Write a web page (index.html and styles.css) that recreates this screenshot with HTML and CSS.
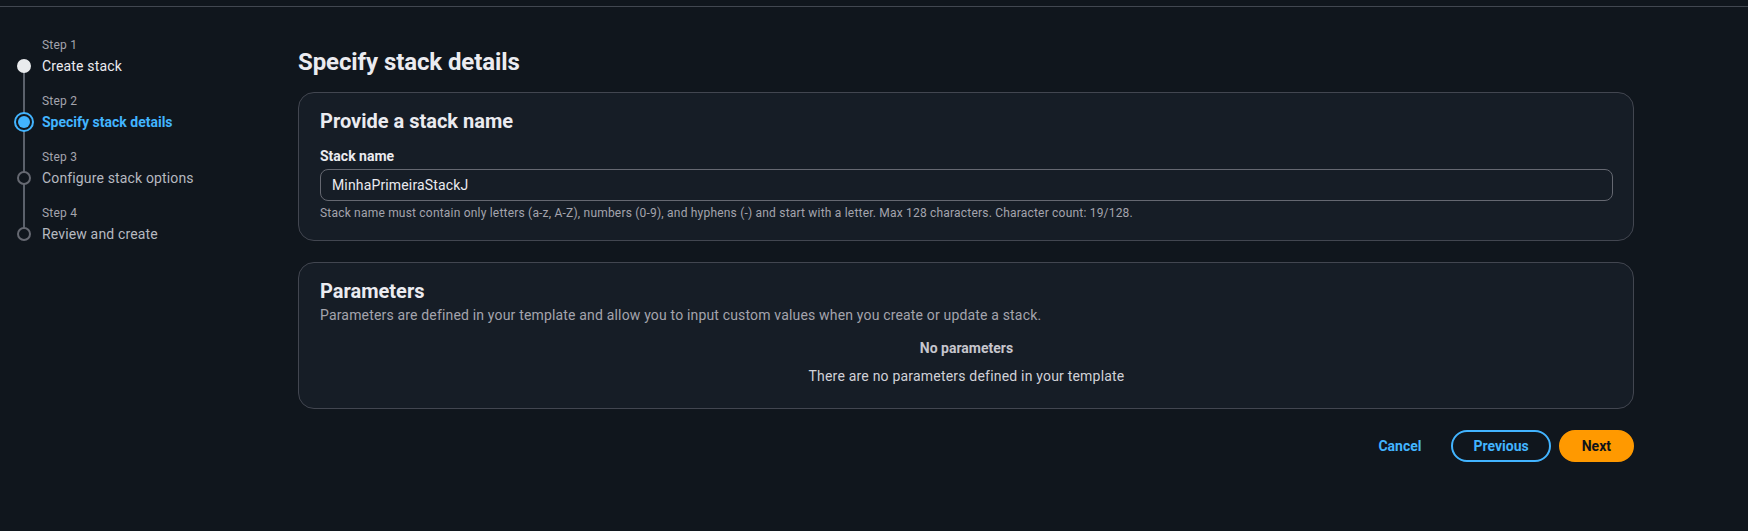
FILE: index.html
```html
<!DOCTYPE html>
<html lang="en">
<head>
<meta charset="utf-8">
<title>Specify stack details</title>
<link rel="stylesheet" href="styles.css">
</head>
<body>
<div class="topbar"></div>
<div class="layout">
  <nav class="steps">
    <ol class="step-list">
      <li class="step done">
        <span class="step-label">Step 1</span>
        <span class="marker"></span>
        <span class="step-title">Create stack</span>
      </li>
      <li class="step active">
        <span class="step-label">Step 2</span>
        <span class="marker"><span class="marker-dot"></span></span>
        <span class="step-title">Specify stack details</span>
      </li>
      <li class="step">
        <span class="step-label">Step 3</span>
        <span class="marker"></span>
        <span class="step-title">Configure stack options</span>
      </li>
      <li class="step">
        <span class="step-label">Step 4</span>
        <span class="marker"></span>
        <span class="step-title">Review and create</span>
      </li>
    </ol>
  </nav>
  <main class="content">
    <h1 class="page-title">Specify stack details</h1>

    <section class="card">
      <h2 class="card-title">Provide a stack name</h2>
      <label class="field-label" for="stackname">Stack name</label>
      <input class="text-input" id="stackname" type="text" value="MinhaPrimeiraStackJ">
      <p class="field-hint">Stack name must contain only letters (a-z, A-Z), numbers (0-9), and hyphens (-) and start with a letter. Max 128 characters. Character count: 19/128.</p>
    </section>

    <section class="card card-params">
      <h2 class="card-title">Parameters</h2>
      <p class="card-desc">Parameters are defined in your template and allow you to input custom values when you create or update a stack.</p>
      <div class="empty">
        <div class="empty-title">No parameters</div>
        <div class="empty-text">There are no parameters defined in your template</div>
      </div>
    </section>

    <div class="actions">
      <button class="btn btn-link" type="button">Cancel</button>
      <button class="btn btn-normal" type="button">Previous</button>
      <button class="btn btn-primary" type="button">Next</button>
    </div>
  </main>
</div>
</body>
</html>
```
FILE: styles.css
```css
* { box-sizing: border-box; }

html, body {
  margin: 0;
  padding: 0;
}

body {
  background: #10161d;
  color: #c6c6cd;
  font-family: Roboto, "Noto Sans", "Liberation Sans", sans-serif;
  font-size: 14px;
  line-height: 20px;
  letter-spacing: 0.15px;
  height: 531px;
  overflow: hidden;
}

.topbar {
  height: 7px;
  border-bottom: 1px solid #414750;
}

.layout {
  display: grid;
  grid-template-columns: 298px 1336px;
}

/* ---------- steps navigation ---------- */
.steps {
  padding: 30px 0 0 10px;
}

.step-list {
  list-style: none;
  margin: 0;
  padding: 0;
}

.step {
  position: relative;
  display: grid;
  grid-template-columns: 28px auto;
  grid-template-rows: 16px 20px;
  column-gap: 4px;
  row-gap: 3px;
  margin-bottom: 17px;
}

.step:not(:last-child)::after {
  content: "";
  position: absolute;
  left: 13px;
  top: 29px;
  width: 2px;
  height: 56px;
  background: #5b616b;
  z-index: 0;
}

.step-label {
  grid-column: 2;
  grid-row: 1;
  font-size: 12px;
  line-height: 16px;
  color: #a4a4ad;
  letter-spacing: 0.2px;
}

.marker {
  grid-column: 1;
  grid-row: 2;
  justify-self: center;
  align-self: center;
  position: relative;
  z-index: 1;
  width: 14px;
  height: 14px;
  border-radius: 50%;
  border: 2px solid #656871;
  background: #10161d;
  display: flex;
  align-items: center;
  justify-content: center;
}

.step.done .marker {
  background: #e9ebed;
  border-color: #e9ebed;
}

.step.active .marker {
  width: 20px;
  height: 20px;
  border-color: #42b4ff;
}

.marker-dot {
  width: 12px;
  height: 12px;
  border-radius: 50%;
  background: #42b4ff;
}

.step-title {
  grid-column: 2;
  grid-row: 2;
  font-size: 14px;
  line-height: 20px;
  color: #b6b9c0;
  white-space: nowrap;
}

.step.done .step-title { color: #ebebf0; }
.step.active .step-title { color: #42b4ff; font-weight: 700; letter-spacing: 0; }

/* ---------- main content ---------- */
.content {
  padding-top: 40px;
}

.page-title {
  margin: 0 0 15px;
  font-size: 24px;
  line-height: 30px;
  font-weight: 700;
  letter-spacing: -0.1px;
  color: #ebebf0;
}

.card {
  background: #161d26;
  border: 1px solid #424650;
  border-radius: 16px;
  padding: 16px 20px 19px 21px;
  display: flex;
  flex-direction: column;
}

.card-params {
  margin-top: 21px;
  padding-bottom: 22px;
}

.card-title {
  margin: 0;
  font-size: 20px;
  line-height: 24px;
  font-weight: 700;
  letter-spacing: 0;
  color: #ebebf0;
}

.field-label {
  margin-top: 13px;
  font-size: 14px;
  line-height: 20px;
  font-weight: 700;
  letter-spacing: 0;
  color: #ebebf0;
}

.text-input {
  margin-top: 3px;
  width: 100%;
  height: 32px;
  background: #161d26;
  border: 1px solid #656871;
  border-radius: 8px;
  padding: 0 11px;
  color: #ebebf0;
  font-family: inherit;
  font-size: 14px;
  letter-spacing: 0.15px;
  outline: none;
}

.field-hint {
  margin: 4px 0 0;
  font-size: 12px;
  line-height: 16px;
  letter-spacing: 0.2px;
  color: #a4a4ad;
}

.card-desc {
  margin: 2px 0 0;
  font-size: 14px;
  line-height: 20px;
  letter-spacing: 0.17px;
  color: #a4a4ad;
}

.empty {
  padding-top: 13px;
  display: flex;
  flex-direction: column;
  align-items: center;
  gap: 8px;
  text-align: center;
}

.empty-title {
  font-weight: 700;
  letter-spacing: 0;
  color: #c6c6cd;
}

.empty-text {
  color: #d1d1d8;
  letter-spacing: 0.2px;
}

.actions {
  margin-top: 21px;
  display: flex;
  justify-content: flex-end;
  gap: 8px;
}

.btn {
  height: 32px;
  padding: 0 20px;
  border: 2px solid transparent;
  border-radius: 20px;
  background: transparent;
  font-family: inherit;
  font-size: 14px;
  line-height: 28px;
  font-weight: 700;
  letter-spacing: 0;
  cursor: pointer;
}

.btn-link {
  color: #42b4ff;
}

.btn-normal {
  color: #42b4ff;
  border-color: #42b4ff;
}

.btn-primary {
  padding: 0 21px;
  background: #ff9900;
  border-color: #ff9900;
  color: #0f141a;
}
```
